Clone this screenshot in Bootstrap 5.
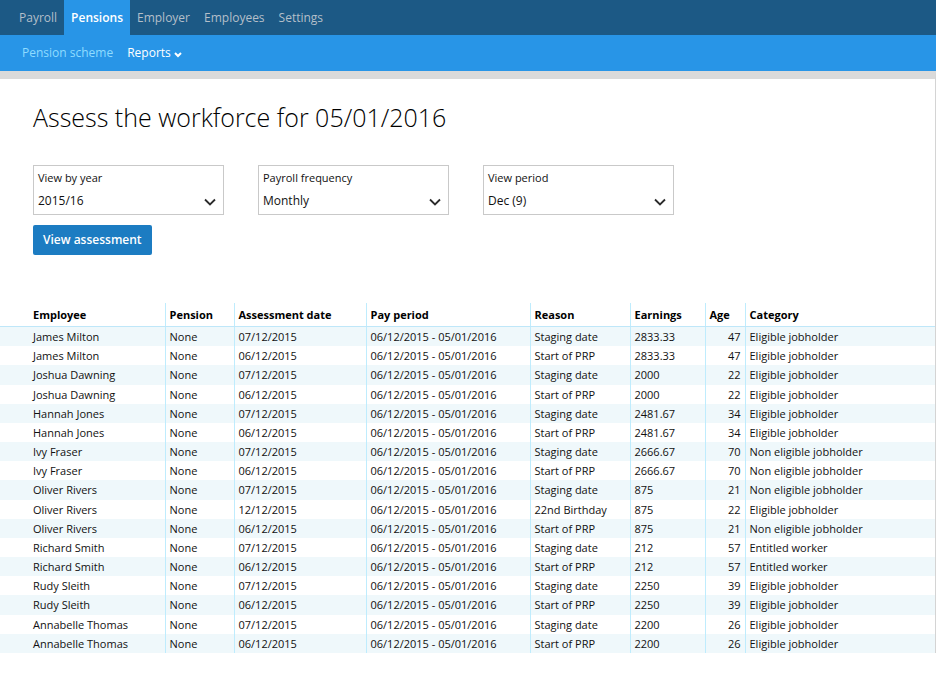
<!DOCTYPE html>
<html lang="en">
<head>
<meta charset="utf-8">
<meta name="viewport" content="width=device-width, initial-scale=1">
<title>Assess the workforce</title>
<link href="https://cdn.jsdelivr.net/npm/bootstrap@5.3.0/dist/css/bootstrap.min.css" rel="stylesheet">
<style>
body { font-family: "Open Sans", sans-serif; font-size: 12px; color: #111; background: #fff; }
.main-bar { background: #1c5985; }
.main-bar .nav { padding-left: 12px; }
.main-bar .nav-link { padding: 0 7px; font-size: 12px; line-height: 35px; color: #b4bfc9; }
.main-bar .nav-link.active { background: #2895e7; color: #fff; font-weight: 600; }
.sub-bar { background: #2895e7; padding-left: 22px; gap: 14px; }
.sub-bar .nav-link { padding: 0; font-size: 12px; line-height: 36px; color: #8fdcff; }
.sub-bar .nav-link.current { color: #fff; font-weight: 500; }
.sub-bar svg { vertical-align: -1px; }
.page-shade { border-top: 8px solid #dadada; border-right: 1px solid #d4d4d4; }
.page-head { padding: 19px 33px 0; }
.page-title { font-size: 25px; line-height: 38px; font-weight: 300; color: #000; margin-bottom: 29px; }
.filters { gap: 10px 34px; }
.field-box { position: relative; width: 191px; height: 50px; border: 1px solid #c9c9c9; padding: 3px 4px; }
.field-box label { display: block; font-size: 11px; line-height: 18px; }
.field-box select { display: block; width: 100%; height: 28px; padding: 0; border: 0; appearance: none; background: transparent; font-size: 12px; color: #111; }
.field-box svg { position: absolute; right: 7px; bottom: 7px; pointer-events: none; }
.btn-assess { margin-top: 10px; height: 30px; padding: 0 10px; border: 0; border-radius: 2px; background: #1c7cc2; color: #fff; font-size: 12px; font-weight: 600; }
.btn-assess:hover { background: #166ba9; color: #fff; }
.results { table-layout: fixed; width: 100%; height: 350px; margin-top: 48px; margin-bottom: 44px; border-collapse: collapse; }
.results th { height: 23px; padding: 0 4px; font-size: 11px; line-height: 23px; font-weight: 700; color: #000; border-bottom: 1px solid #bfe7f9; }
.results td { height: 19px; padding: 0 4px; font-size: 11px; line-height: 19px; white-space: nowrap; }
.results th:first-child, .results td:first-child { padding-left: 33px; }
.results th + th, .results td + td { border-left: 1px solid #bfecfd; }
.results tbody tr:nth-child(odd) { background: #eff8fb; }
.c-name { width: 165px; } .c-pension { width: 69px; } .c-date { width: 132px; } .c-period { width: 164px; }
.c-reason { width: 100px; } .c-earn { width: 75px; } .c-age { width: 40px; }
</style>
<script src="https://cdn.jsdelivr.net/npm/bootstrap@5.3.0/dist/js/bootstrap.bundle.min.js" defer></script>
</head>
<body>
<header>
  <nav class="main-bar" aria-label="Main">
    <ul class="nav">
      <li class="nav-item"><a class="nav-link" href="#">Payroll</a></li>
      <li class="nav-item"><a class="nav-link active" aria-current="page" href="#">Pensions</a></li>
      <li class="nav-item"><a class="nav-link" href="#">Employer</a></li>
      <li class="nav-item"><a class="nav-link" href="#">Employees</a></li>
      <li class="nav-item"><a class="nav-link" href="#">Settings</a></li>
    </ul>
  </nav>
  <nav class="nav sub-bar" aria-label="Pensions">
    <a class="nav-link" href="#">Pension scheme</a>
    <a class="nav-link current" href="#">Reports <svg width="8" height="6" viewBox="0 0 8 6" fill="none" stroke="currentColor" stroke-width="2" aria-hidden="true"><path d="M1 1l3 3 3-3"/></svg></a>
  </nav>
</header>
<main class="page-shade">
  <div class="page-head">
    <h1 class="page-title">Assess the workforce for 05/01/2016</h1>
    <form>
      <div class="filters d-flex flex-wrap">
        <div class="field-box">
          <label for="year">View by year</label>
          <select id="year"><option>2015/16</option></select>
          <svg width="12" height="9" viewBox="0 0 12 9" fill="none" stroke="#2b2b2b" stroke-width="1.8" aria-hidden="true"><path d="M1 1.5l5 5 5-5"/></svg>
        </div>
        <div class="field-box">
          <label for="frequency">Payroll frequency</label>
          <select id="frequency"><option>Monthly</option></select>
          <svg width="12" height="9" viewBox="0 0 12 9" fill="none" stroke="#2b2b2b" stroke-width="1.8" aria-hidden="true"><path d="M1 1.5l5 5 5-5"/></svg>
        </div>
        <div class="field-box">
          <label for="period">View period</label>
          <select id="period"><option>Dec (9)</option></select>
          <svg width="12" height="9" viewBox="0 0 12 9" fill="none" stroke="#2b2b2b" stroke-width="1.8" aria-hidden="true"><path d="M1 1.5l5 5 5-5"/></svg>
        </div>
      </div>
      <button class="btn btn-assess" type="button">View assessment</button>
    </form>
  </div>
  <table class="results">
    <colgroup><col class="c-name"><col class="c-pension"><col class="c-date"><col class="c-period"><col class="c-reason"><col class="c-earn"><col class="c-age"><col></colgroup>
    <thead>
      <tr><th scope="col">Employee</th><th scope="col">Pension</th><th scope="col">Assessment date</th><th scope="col">Pay period</th><th scope="col">Reason</th><th scope="col">Earnings</th><th scope="col">Age</th><th scope="col">Category</th></tr>
    </thead>
    <tbody>
      <tr><td>James Milton</td><td>None</td><td>07/12/2015</td><td>06/12/2015 - 05/01/2016</td><td>Staging date</td><td>2833.33</td><td class="text-end">47</td><td>Eligible jobholder</td></tr>
      <tr><td>James Milton</td><td>None</td><td>06/12/2015</td><td>06/12/2015 - 05/01/2016</td><td>Start of PRP</td><td>2833.33</td><td class="text-end">47</td><td>Eligible jobholder</td></tr>
      <tr><td>Joshua Dawning</td><td>None</td><td>07/12/2015</td><td>06/12/2015 - 05/01/2016</td><td>Staging date</td><td>2000</td><td class="text-end">22</td><td>Eligible jobholder</td></tr>
      <tr><td>Joshua Dawning</td><td>None</td><td>06/12/2015</td><td>06/12/2015 - 05/01/2016</td><td>Start of PRP</td><td>2000</td><td class="text-end">22</td><td>Eligible jobholder</td></tr>
      <tr><td>Hannah Jones</td><td>None</td><td>07/12/2015</td><td>06/12/2015 - 05/01/2016</td><td>Staging date</td><td>2481.67</td><td class="text-end">34</td><td>Eligible jobholder</td></tr>
      <tr><td>Hannah Jones</td><td>None</td><td>06/12/2015</td><td>06/12/2015 - 05/01/2016</td><td>Start of PRP</td><td>2481.67</td><td class="text-end">34</td><td>Eligible jobholder</td></tr>
      <tr><td>Ivy Fraser</td><td>None</td><td>07/12/2015</td><td>06/12/2015 - 05/01/2016</td><td>Staging date</td><td>2666.67</td><td class="text-end">70</td><td>Non eligible jobholder</td></tr>
      <tr><td>Ivy Fraser</td><td>None</td><td>06/12/2015</td><td>06/12/2015 - 05/01/2016</td><td>Start of PRP</td><td>2666.67</td><td class="text-end">70</td><td>Non eligible jobholder</td></tr>
      <tr><td>Oliver Rivers</td><td>None</td><td>07/12/2015</td><td>06/12/2015 - 05/01/2016</td><td>Staging date</td><td>875</td><td class="text-end">21</td><td>Non eligible jobholder</td></tr>
      <tr><td>Oliver Rivers</td><td>None</td><td>12/12/2015</td><td>06/12/2015 - 05/01/2016</td><td>22nd Birthday</td><td>875</td><td class="text-end">22</td><td>Eligible jobholder</td></tr>
      <tr><td>Oliver Rivers</td><td>None</td><td>06/12/2015</td><td>06/12/2015 - 05/01/2016</td><td>Start of PRP</td><td>875</td><td class="text-end">21</td><td>Non eligible jobholder</td></tr>
      <tr><td>Richard Smith</td><td>None</td><td>07/12/2015</td><td>06/12/2015 - 05/01/2016</td><td>Staging date</td><td>212</td><td class="text-end">57</td><td>Entitled worker</td></tr>
      <tr><td>Richard Smith</td><td>None</td><td>06/12/2015</td><td>06/12/2015 - 05/01/2016</td><td>Start of PRP</td><td>212</td><td class="text-end">57</td><td>Entitled worker</td></tr>
      <tr><td>Rudy Sleith</td><td>None</td><td>07/12/2015</td><td>06/12/2015 - 05/01/2016</td><td>Staging date</td><td>2250</td><td class="text-end">39</td><td>Eligible jobholder</td></tr>
      <tr><td>Rudy Sleith</td><td>None</td><td>06/12/2015</td><td>06/12/2015 - 05/01/2016</td><td>Start of PRP</td><td>2250</td><td class="text-end">39</td><td>Eligible jobholder</td></tr>
      <tr><td>Annabelle Thomas</td><td>None</td><td>07/12/2015</td><td>06/12/2015 - 05/01/2016</td><td>Staging date</td><td>2200</td><td class="text-end">26</td><td>Eligible jobholder</td></tr>
      <tr><td>Annabelle Thomas</td><td>None</td><td>06/12/2015</td><td>06/12/2015 - 05/01/2016</td><td>Start of PRP</td><td>2200</td><td class="text-end">26</td><td>Eligible jobholder</td></tr>
    </tbody>
  </table>
</main>
</body>
</html>
